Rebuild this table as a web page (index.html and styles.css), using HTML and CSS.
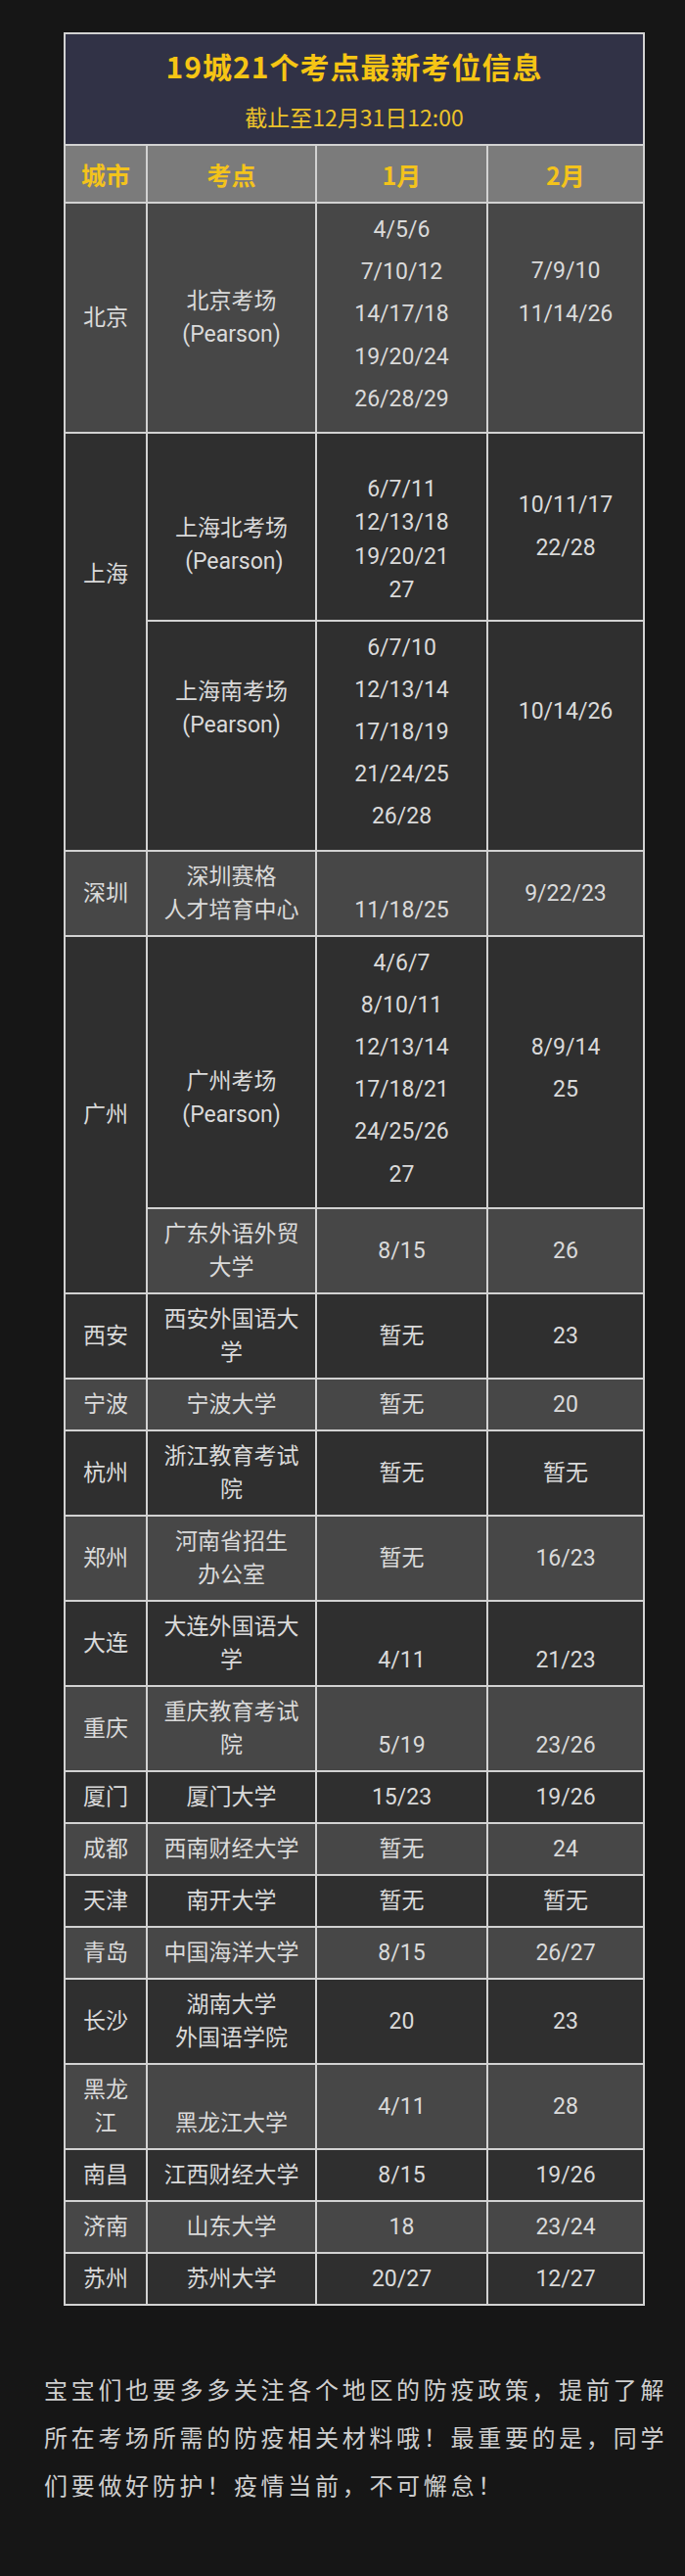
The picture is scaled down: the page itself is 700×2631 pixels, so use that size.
FILE: index.html
```html
<!DOCTYPE html>
<html lang="zh-CN">
<head>
<meta charset="utf-8">
<title>19城21个考点最新考位信息</title>
<link rel="stylesheet" href="styles.css">
</head>
<body>
<main class="page">
  <table class="seats">
    <colgroup>
      <col class="c-city">
      <col class="c-site">
      <col class="c-jan">
      <col class="c-feb">
    </colgroup>
    <thead>
      <tr>
        <th class="banner" colspan="4">
          <div class="banner-title">19城21个考点最新考位信息</div>
          <div class="banner-sub">截止至12月31日12:00</div>
        </th>
      </tr>
      <tr class="head">
        <th>城市</th>
        <th>考点</th>
        <th>1月</th>
        <th>2月</th>
      </tr>
    </thead>
    <tbody>
      <tr class="light">
        <td>北京</td>
        <td>北京考场<br>(Pearson)</td>
        <td class="dates">4/5/6<br>7/10/12<br>14/17/18<br>19/20/24<br>26/28/29</td>
        <td class="dates bj-feb">7/9/10<br>11/14/26</td>
      </tr>
      <tr class="dark">
        <td class="sh-city" rowspan="2">上海</td>
        <td class="shn-site">上海北考场<br>&nbsp;(Pearson)</td>
        <td class="dates-sm">6/7/11<br>12/13/18<br>19/20/21<br>27</td>
        <td class="dates-wide">10/11/17<br>22/28</td>
      </tr>
      <tr class="dark">
        <td class="shs-site">上海南考场<br>(Pearson)</td>
        <td class="dates">6/7/10<br>12/13/14<br>17/18/19<br>21/24/25<br>26/28</td>
        <td class="shs-feb">10/14/26</td>
      </tr>
      <tr class="light">
        <td>深圳</td>
        <td>深圳赛格<br>人才培育中心</td>
        <td class="low">11/18/25</td>
        <td>9/22/23</td>
      </tr>
      <tr class="dark">
        <td class="gz-city" rowspan="2">广州</td>
        <td class="gz-site">广州考场<br>(Pearson)</td>
        <td class="dates">4/6/7<br>8/10/11<br>12/13/14<br>17/18/21<br>24/25/26<br>27</td>
        <td class="dates">8/9/14<br>25</td>
      </tr>
      <tr class="light">
        <td>广东外语外贸<br>大学</td>
        <td>8/15</td>
        <td>26</td>
      </tr>
      <tr class="dark">
        <td>西安</td>
        <td>西安外国语大<br>学</td>
        <td>暂无</td>
        <td>23</td>
      </tr>
      <tr class="light">
        <td>宁波</td>
        <td>宁波大学</td>
        <td>暂无</td>
        <td>20</td>
      </tr>
      <tr class="dark">
        <td>杭州</td>
        <td>浙江教育考试<br>院</td>
        <td>暂无</td>
        <td>暂无</td>
      </tr>
      <tr class="light">
        <td>郑州</td>
        <td>河南省招生<br>办公室</td>
        <td>暂无</td>
        <td>16/23</td>
      </tr>
      <tr class="dark">
        <td>大连</td>
        <td>大连外国语大<br>学</td>
        <td class="low">4/11</td>
        <td class="low">21/23</td>
      </tr>
      <tr class="light">
        <td>重庆</td>
        <td>重庆教育考试<br>院</td>
        <td class="low">5/19</td>
        <td class="low">23/26</td>
      </tr>
      <tr class="dark">
        <td>厦门</td>
        <td>厦门大学</td>
        <td>15/23</td>
        <td>19/26</td>
      </tr>
      <tr class="light">
        <td>成都</td>
        <td>西南财经大学</td>
        <td>暂无</td>
        <td>24</td>
      </tr>
      <tr class="dark">
        <td>天津</td>
        <td>南开大学</td>
        <td>暂无</td>
        <td>暂无</td>
      </tr>
      <tr class="light">
        <td>青岛</td>
        <td>中国海洋大学</td>
        <td>8/15</td>
        <td>26/27</td>
      </tr>
      <tr class="dark">
        <td>长沙</td>
        <td>湖南大学<br>外国语学院</td>
        <td>20</td>
        <td>23</td>
      </tr>
      <tr class="light">
        <td>黑龙<br>江</td>
        <td class="low">黑龙江大学</td>
        <td>4/11</td>
        <td>28</td>
      </tr>
      <tr class="dark">
        <td>南昌</td>
        <td>江西财经大学</td>
        <td>8/15</td>
        <td>19/26</td>
      </tr>
      <tr class="light">
        <td>济南</td>
        <td>山东大学</td>
        <td>18</td>
        <td>23/24</td>
      </tr>
      <tr class="dark">
        <td>苏州</td>
        <td>苏州大学</td>
        <td>20/27</td>
        <td>12/27</td>
      </tr>
    </tbody>
  </table>

  <p class="note">宝宝们也要多多关注各个地区的防疫政策，提前了解所在考场所需的防疫相关材料哦！最重要的是，同学们要做好防护！疫情当前，不可懈怠！</p>
</main>
</body>
</html>
```

FILE: styles.css
```css
html {
  background: #161616;
}

body {
  margin: 0;
  background: #161616;
  font-family: Roboto, "Noto Sans CJK SC", "Noto Sans", sans-serif;
}

.page {
  padding: 33px 0 60px;
  min-height: 2538px;
}

.seats {
  margin-left: 65px;
  width: 592px;
  table-layout: fixed;
  border-collapse: collapse;
  border: 2px solid #d6d6d6;
}

.c-city { width: 84px; }
.c-site { width: 173px; }
.c-jan  { width: 175px; }
.c-feb  { width: 160px; }

.seats th,
.seats td {
  border: 2px solid #d2d2d2;
  text-align: center;
  vertical-align: middle;
  padding: 9px 6px 8px;
  line-height: 34px;
  font-size: 23px;
  color: #dadada;
  font-weight: 400;
}

/* banner */
.seats th.banner {
  background: #313246;
  padding: 10px 0 10px;
  font-family: "Noto Sans CJK SC", sans-serif;
}

.banner-title {
  font-size: 30px;
  line-height: 44px;
  font-weight: 700;
  letter-spacing: 1px;
  color: #f6c514;
}

.banner-sub {
  margin-top: 12px;
  font-size: 23px;
  line-height: 36px;
  color: #ebc22a;
}

/* column head */
.head th {
  background: #7b7b7b;
  font-family: "Noto Sans CJK SC", sans-serif;
  font-size: 25px;
  font-weight: 700;
  color: #f3c31c;
  padding: 12px 4px 11px;
}

/* row tones */
.light td { background: #474747; }
.dark td  { background: #2f2f2f; }

/* multi-line date lists */
.seats td.dates {
  line-height: 43.2px;
  padding: 5px 6px 12px;
}

.seats td.bj-feb {
  padding: 0 6px 52px;
}

.seats td.dates-sm {
  line-height: 34.4px;
  padding: 40px 6px 12px;
}

.seats td.dates-wide {
  line-height: 44px;
}

/* vertical placement tweaks */
.seats td.low {
  padding-top: 43px;
  padding-bottom: 8px;
}

.seats td.shn-site {
  padding-top: 45px;
  padding-bottom: 7px;
}

.seats td.shs-site {
  padding-top: 0;
  padding-bottom: 54px;
}

.seats td.shs-feb {
  padding-top: 0;
  padding-bottom: 49px;
}

.seats td.sh-city {
  padding-top: 0;
  padding-bottom: 136px;
}

.seats td.gz-site {
  padding-top: 55px;
  padding-bottom: 0;
}

/* closing note */
.note {
  margin: 60px 0 0 45px;
  width: 650px;
  font-family: "Noto Sans CJK SC", sans-serif;
  font-size: 24px;
  line-height: 49px;
  letter-spacing: 3.7px;
  color: #cfcfcf;
}
```
